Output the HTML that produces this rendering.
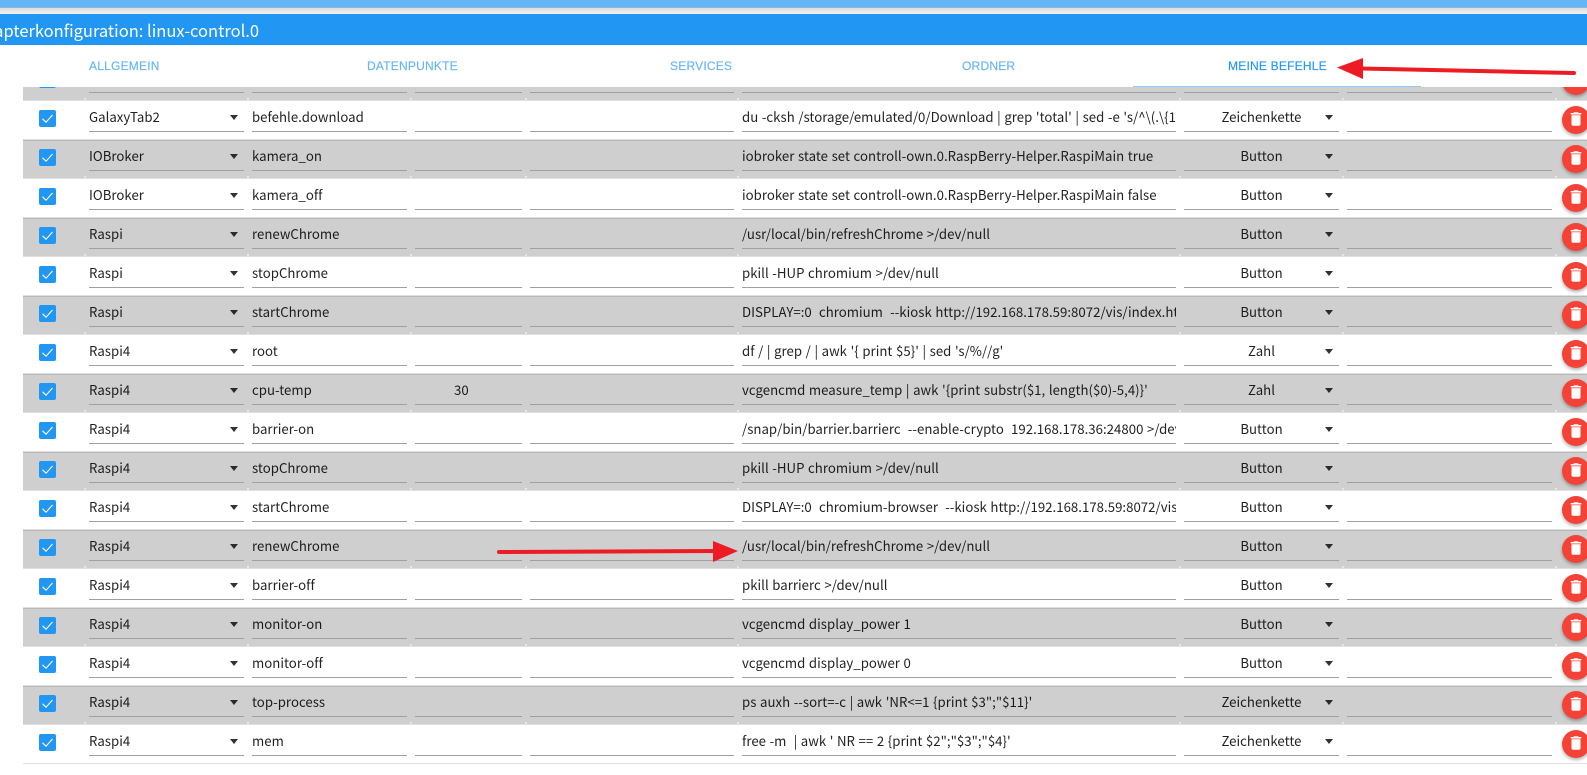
<!DOCTYPE html>
<html lang="de"><head><meta charset="utf-8"><title>Adapterkonfiguration</title>
<style>
html,body{margin:0;padding:0;width:1587px;height:775px;overflow:hidden;background:#fff;font-family:"Noto Sans CJK JP","Liberation Sans",sans-serif;color:rgba(0,0,0,.87)}
#top{position:absolute;left:0;top:0;width:1587px;height:8px;background:#64b5f6;border-bottom:1px solid #8fb8d8;box-sizing:border-box}
#sh{position:absolute;left:0;top:8px;width:1587px;height:6px;background:linear-gradient(#dcdcdc,#f2f2f2)}
#bar{position:absolute;left:0;top:14px;width:1587px;height:31px;background:#2196f3}
#title{position:absolute;right:1328px;top:15px;height:31px;line-height:31px;font-size:16.5px;color:#fff;white-space:nowrap}
.tab{position:absolute;top:58px;font:12px/17px "Liberation Sans",sans-serif;color:#64b5f6;white-space:nowrap;letter-spacing:.22px;-webkit-text-stroke:.15px currentColor}
#ind{position:absolute;left:1133px;top:86px;width:288px;height:1px;background:#90caf9}
#t{position:absolute;left:0;top:87px;width:1587px;height:688px;overflow:hidden}
.r{position:absolute;left:23px;width:1564px;height:39px;background-repeat:no-repeat;
background-image:linear-gradient(#a0a0a0,#a0a0a0),linear-gradient(#a0a0a0,#a0a0a0),linear-gradient(#a0a0a0,#a0a0a0),linear-gradient(#a0a0a0,#a0a0a0),linear-gradient(#a0a0a0,#a0a0a0),linear-gradient(#a0a0a0,#a0a0a0),linear-gradient(#a0a0a0,#a0a0a0),linear-gradient(#e0e0e0,#e0e0e0);
background-size:155px 1px,155px 1px,107px 1px,204px 1px,434px 1px,155px 1px,205px 1px,1564px 1px;
background-position:66px 30px,229px 30px,392px 30px,507px 30px,719px 30px,1161px 30px,1324px 30px,0 38px}
.g{background-color:#cfcfcf;box-shadow:inset 0 1px 0 #b9b9b9}
.g::before{content:"";position:absolute;left:0;top:36px;width:1564px;height:2px;background-repeat:no-repeat;
background-image:linear-gradient(#e6e6e6,#e6e6e6),linear-gradient(#e6e6e6,#e6e6e6),linear-gradient(#e6e6e6,#e6e6e6),linear-gradient(#e6e6e6,#e6e6e6),linear-gradient(#e6e6e6,#e6e6e6),linear-gradient(#e6e6e6,#e6e6e6),linear-gradient(#e6e6e6,#e6e6e6),linear-gradient(#e6e6e6,#e6e6e6);
background-size:2px 2px;
background-position:61px 0,224px 0,387px 0,502px 0,714px 0,1156px 0,1319px 0,1532px 0}
.c{position:absolute;left:16px;top:9px;width:17px;height:17px;background:#2196f3;border-radius:2px}
.c svg{display:block}
.x{position:absolute;top:5px;height:22px;line-height:22px;font-size:13.2px;letter-spacing:.03px;word-spacing:.6px;white-space:pre;overflow:hidden}
.s{left:66px;width:130px}
.n{left:229px;width:155px}
.m{left:719px;width:434px}
.y{left:1161px;width:155px;text-align:center}
.a{position:absolute;top:14px;width:0;height:0;border-left:4.5px solid transparent;border-right:4.5px solid transparent;border-top:5px solid rgba(0,0,0,.8)}
.a1{left:206.5px}
.a2{left:1301.5px}
.d{position:absolute;left:1539px;top:5px;width:28px;height:28px;border-radius:50%;background:#f44336;box-shadow:0 2px 3px rgba(0,0,0,.3)}
.d svg{position:absolute;left:5px;top:4px}
#arrows{position:absolute;left:0;top:0;pointer-events:none}
</style></head><body>
<div id="top"></div><div id="sh"></div><div id="bar"></div>
<div id="title">Adapterkonfiguration: linux-control.0</div>
<div class="tab" style="left:89px">ALLGEMEIN</div>
<div class="tab" style="left:367px">DATENPUNKTE</div>
<div class="tab" style="left:670px">SERVICES</div>
<div class="tab" style="left:962px">ORDNER</div>
<div class="tab" style="left:1228px;color:#2196f3">MEINE BEFEHLE</div>
<div id="ind"></div>
<svg width="0" height="0" style="position:absolute"><defs>
<symbol id="k" viewBox="0 0 17 17"><path d="M3.5 8.8L7 12.2L13.5 5" fill="none" stroke="#fff" stroke-width="1.1"/></symbol>
<symbol id="b" viewBox="0 0 24 24"><path fill="#fff" d="M6 19c0 1.1.9 2 2 2h8c1.1 0 2-.9 2-2V7H6v12zM19 4h-3.5l-1-1h-5l-1 1H5v2h14V4z"/></symbol>
</defs></svg>
<div id="t">
<div class="r g" style="top:-25px"><div class="c"><svg width="17" height="17"><use href="#k"/></svg></div><div class="d"><svg width="18" height="18"><use href="#b"/></svg></div></div>
<div class="r" style="top:14px"><div class="c"><svg width="17" height="17"><use href="#k"/></svg></div><div class="x s">GalaxyTab2</div><i class="a a1"></i><div class="x n">befehle.download</div><div class="x m">du -cksh /storage/emulated/0/Download | grep 'total' | sed -e 's/^\(.\{1,\}\).*/\1/'</div><div class="x y">Zeichenkette</div><i class="a a2"></i><div class="d"><svg width="18" height="18"><use href="#b"/></svg></div></div>
<div class="r g" style="top:53px"><div class="c"><svg width="17" height="17"><use href="#k"/></svg></div><div class="x s">IOBroker</div><i class="a a1"></i><div class="x n">kamera_on</div><div class="x m">iobroker state set controll-own.0.RaspBerry-Helper.RaspiMain true</div><div class="x y">Button</div><i class="a a2"></i><div class="d"><svg width="18" height="18"><use href="#b"/></svg></div></div>
<div class="r" style="top:92px"><div class="c"><svg width="17" height="17"><use href="#k"/></svg></div><div class="x s">IOBroker</div><i class="a a1"></i><div class="x n">kamera_off</div><div class="x m">iobroker state set controll-own.0.RaspBerry-Helper.RaspiMain false</div><div class="x y">Button</div><i class="a a2"></i><div class="d"><svg width="18" height="18"><use href="#b"/></svg></div></div>
<div class="r g" style="top:131px"><div class="c"><svg width="17" height="17"><use href="#k"/></svg></div><div class="x s">Raspi</div><i class="a a1"></i><div class="x n">renewChrome</div><div class="x m">/usr/local/bin/refreshChrome &gt;/dev/null</div><div class="x y">Button</div><i class="a a2"></i><div class="d"><svg width="18" height="18"><use href="#b"/></svg></div></div>
<div class="r" style="top:170px"><div class="c"><svg width="17" height="17"><use href="#k"/></svg></div><div class="x s">Raspi</div><i class="a a1"></i><div class="x n">stopChrome</div><div class="x m">pkill -HUP chromium &gt;/dev/null</div><div class="x y">Button</div><i class="a a2"></i><div class="d"><svg width="18" height="18"><use href="#b"/></svg></div></div>
<div class="r g" style="top:209px"><div class="c"><svg width="17" height="17"><use href="#k"/></svg></div><div class="x s">Raspi</div><i class="a a1"></i><div class="x n">startChrome</div><div class="x m">DISPLAY=:0  chromium  --kiosk http://192.168.178.59:8072/vis/index.html</div><div class="x y">Button</div><i class="a a2"></i><div class="d"><svg width="18" height="18"><use href="#b"/></svg></div></div>
<div class="r" style="top:248px"><div class="c"><svg width="17" height="17"><use href="#k"/></svg></div><div class="x s">Raspi4</div><i class="a a1"></i><div class="x n">root</div><div class="x m">df / | grep / | awk '{ print $5}' | sed 's/%//g'</div><div class="x y">Zahl</div><i class="a a2"></i><div class="d"><svg width="18" height="18"><use href="#b"/></svg></div></div>
<div class="r g" style="top:287px"><div class="c"><svg width="17" height="17"><use href="#k"/></svg></div><div class="x s">Raspi4</div><i class="a a1"></i><div class="x n">cpu-temp</div><div class="x" style="left:431px">30</div><div class="x m">vcgencmd measure_temp | awk '{print substr($1, length($0)-5,4)}'</div><div class="x y">Zahl</div><i class="a a2"></i><div class="d"><svg width="18" height="18"><use href="#b"/></svg></div></div>
<div class="r" style="top:326px"><div class="c"><svg width="17" height="17"><use href="#k"/></svg></div><div class="x s">Raspi4</div><i class="a a1"></i><div class="x n">barrier-on</div><div class="x m">/snap/bin/barrier.barrierc  --enable-crypto  192.168.178.36:24800 &gt;/dev/null</div><div class="x y">Button</div><i class="a a2"></i><div class="d"><svg width="18" height="18"><use href="#b"/></svg></div></div>
<div class="r g" style="top:365px"><div class="c"><svg width="17" height="17"><use href="#k"/></svg></div><div class="x s">Raspi4</div><i class="a a1"></i><div class="x n">stopChrome</div><div class="x m">pkill -HUP chromium &gt;/dev/null</div><div class="x y">Button</div><i class="a a2"></i><div class="d"><svg width="18" height="18"><use href="#b"/></svg></div></div>
<div class="r" style="top:404px"><div class="c"><svg width="17" height="17"><use href="#k"/></svg></div><div class="x s">Raspi4</div><i class="a a1"></i><div class="x n">startChrome</div><div class="x m">DISPLAY=:0  chromium-browser  --kiosk http://192.168.178.59:8072/vis/index.html</div><div class="x y">Button</div><i class="a a2"></i><div class="d"><svg width="18" height="18"><use href="#b"/></svg></div></div>
<div class="r g" style="top:443px"><div class="c"><svg width="17" height="17"><use href="#k"/></svg></div><div class="x s">Raspi4</div><i class="a a1"></i><div class="x n">renewChrome</div><div class="x m">/usr/local/bin/refreshChrome &gt;/dev/null</div><div class="x y">Button</div><i class="a a2"></i><div class="d"><svg width="18" height="18"><use href="#b"/></svg></div></div>
<div class="r" style="top:482px"><div class="c"><svg width="17" height="17"><use href="#k"/></svg></div><div class="x s">Raspi4</div><i class="a a1"></i><div class="x n">barrier-off</div><div class="x m">pkill barrierc &gt;/dev/null</div><div class="x y">Button</div><i class="a a2"></i><div class="d"><svg width="18" height="18"><use href="#b"/></svg></div></div>
<div class="r g" style="top:521px"><div class="c"><svg width="17" height="17"><use href="#k"/></svg></div><div class="x s">Raspi4</div><i class="a a1"></i><div class="x n">monitor-on</div><div class="x m">vcgencmd display_power 1</div><div class="x y">Button</div><i class="a a2"></i><div class="d"><svg width="18" height="18"><use href="#b"/></svg></div></div>
<div class="r" style="top:560px"><div class="c"><svg width="17" height="17"><use href="#k"/></svg></div><div class="x s">Raspi4</div><i class="a a1"></i><div class="x n">monitor-off</div><div class="x m">vcgencmd display_power 0</div><div class="x y">Button</div><i class="a a2"></i><div class="d"><svg width="18" height="18"><use href="#b"/></svg></div></div>
<div class="r g" style="top:599px"><div class="c"><svg width="17" height="17"><use href="#k"/></svg></div><div class="x s">Raspi4</div><i class="a a1"></i><div class="x n">top-process</div><div class="x m">ps auxh --sort=-c | awk 'NR&lt;=1 {print $3";"$11}'</div><div class="x y">Zeichenkette</div><i class="a a2"></i><div class="d"><svg width="18" height="18"><use href="#b"/></svg></div></div>
<div class="r" style="top:638px"><div class="c"><svg width="17" height="17"><use href="#k"/></svg></div><div class="x s">Raspi4</div><i class="a a1"></i><div class="x n">mem</div><div class="x m">free -m  | awk ' NR == 2 {print $2";"$3";"$4}'</div><div class="x y">Zeichenkette</div><i class="a a2"></i><div class="d"><svg width="18" height="18"><use href="#b"/></svg></div></div>
</div>
<svg id="arrows" width="1587" height="775">
<path d="M1360 68.5L1574 73" stroke="#ed1c24" stroke-width="4" stroke-linecap="round" fill="none"/>
<path d="M1337 67.5L1363 58L1363 79Z" fill="#ed1c24"/>
<path d="M499 552L716 551" stroke="#ed1c24" stroke-width="4" stroke-linecap="round" fill="none"/>
<path d="M738 551L713 541L713 562Z" fill="#ed1c24"/>
</svg>
</body></html>
